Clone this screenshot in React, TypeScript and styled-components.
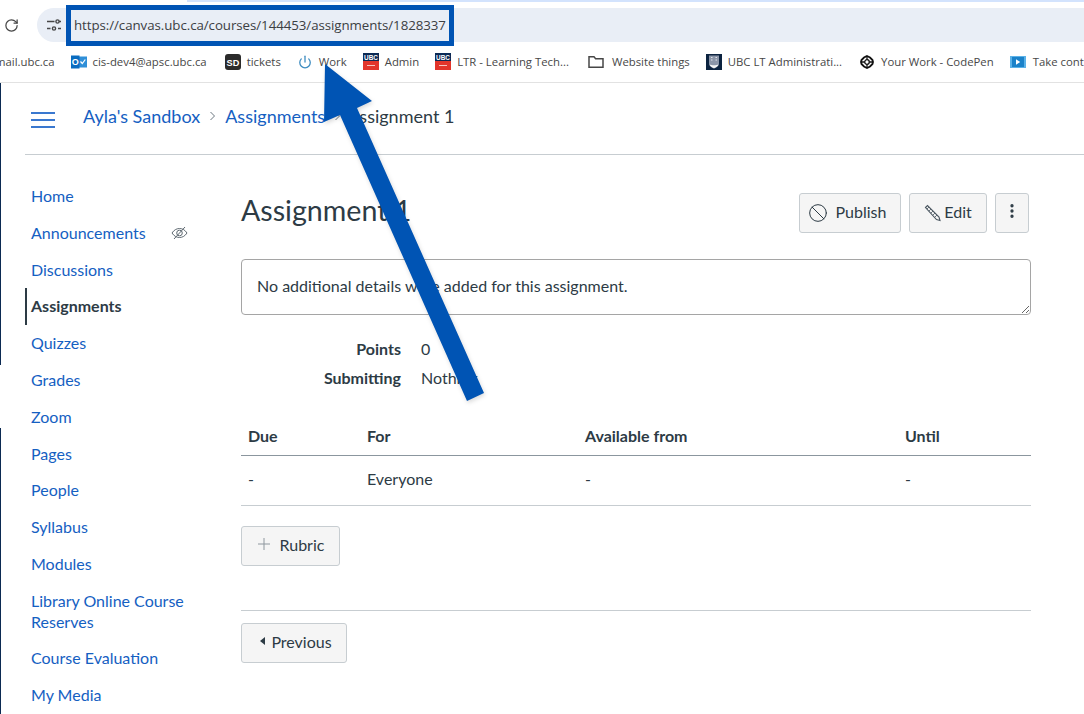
import React from "react";
import styled, { createGlobalStyle } from "styled-components";
import { Ban, EllipsisVertical, Power, RotateCw } from "lucide-react";

const GlobalStyle = createGlobalStyle`
  html, body {
    margin: 0;
    padding: 0;
    background: #fff;
  }
  * {
    box-sizing: border-box;
  }
`;

const Page = styled.div`
  position: relative;
  width: 1084px;
  height: 714px;
  overflow: hidden;
  background: #fff;
  font-family: Lato, "Liberation Sans", sans-serif;
  font-size: 16px;
  color: #2d3b45;
`;

const TabStrip = styled.div`
  height: 8px;
  padding-left: 187px;
`;

const TabEdge = styled.div`
  height: 2px;
  background: #d3e3fd;
`;

const AddressRow = styled.div`
  display: flex;
  align-items: center;
  height: 34px;
  padding-left: 4px;
`;

const Reload = styled.div`
  display: flex;
  width: 33px;
  color: #474747;
`;

const Omnibox = styled.div`
  flex: 1;
  display: flex;
  align-items: center;
  height: 34px;
  padding-left: 10px;
  background: #e9eef6;
  border-radius: 17px 0 0 17px;
`;

const Url = styled.span`
  margin-left: 13px;
  font-family: "Open Sans", "Liberation Sans", sans-serif;
  font-size: 13.3px;
  letter-spacing: -0.06px;
  color: #3c4043;
  white-space: nowrap;
`;

const BookmarksBar = styled.div`
  display: flex;
  align-items: center;
  height: 41px;
  margin-left: -5px;
  padding-bottom: 1px;
  gap: 16px;
  border-bottom: 1px solid #e2e2e2;
  white-space: nowrap;
  font-family: "Open Sans", "Liberation Sans", sans-serif;
  font-size: 11.35px;
  color: #474747;
`;

const Bookmark = styled.div<{ $gap?: number; $shift?: number }>`
  display: flex;
  align-items: center;
  gap: ${(p) => p.$gap ?? 6}px;
  flex: none;
  margin-left: ${(p) => p.$shift ?? 0}px;
`;

const TileIcon = styled.svg`
  flex: none;
  display: block;
`;

const Body = styled.div`
  display: flex;
  height: 632px;
`;

const Rail = styled.div`
  display: flex;
  flex-direction: column;
  width: 25px;
  flex: none;
`;

const RailLine = styled.div<{ $height?: number; $hidden?: boolean }>`
  width: 1px;
  background: ${(p) => (p.$hidden ? "transparent" : "#0b2a52")};
  height: ${(p) => (p.$height ? `${p.$height}px` : "auto")};
  flex: ${(p) => (p.$height ? "none" : "1")};
`;

const Content = styled.div`
  flex: 1;
  min-width: 0;
`;

const Header = styled.div`
  display: flex;
  align-items: center;
  height: 72px;
  padding-left: 6px;
  padding-bottom: 6px;
  border-bottom: 1px solid #c7cdd1;
`;

const Burger = styled.div`
  display: flex;
  flex-direction: column;
  gap: 5.3px;
  width: 24px;
  margin: 9px 28px 0 0;
  span {
    display: block;
    height: 2px;
    background: #3a78cf;
  }
`;

const Crumb = styled.span<{ $current?: boolean }>`
  font-size: 18px;
  margin-left: ${(p) => (p.$current ? -3 : 0)}px;
  color: ${(p) => (p.$current ? "#2d3b45" : "#1560c2")};
`;

const CrumbSep = styled.svg`
  margin: 0 9px;
  flex: none;
`;

const Columns = styled.div`
  display: flex;
`;

const Sidebar = styled.nav`
  width: 216px;
  flex: none;
  padding-top: 23px;
`;

const NavItem = styled.div<{ $active?: boolean }>`
  display: flex;
  align-items: center;
  justify-content: space-between;
  width: 163px;
  padding: 8px 0 8px ${(p) => (p.$active ? 4 : 6)}px;
  line-height: 20.8px;
  color: ${(p) => (p.$active ? "#2d3b45" : "#1560c2")};
  font-weight: ${(p) => (p.$active ? 700 : 400)};
  border-left: ${(p) => (p.$active ? "2px solid #2d3b45" : "none")};
`;

const Main = styled.main`
  width: 790px;
  flex: none;
  padding-top: 38px;
`;

const TitleRow = styled.div`
  display: flex;
  align-items: flex-start;
  justify-content: space-between;
  padding-right: 2px;
`;

const Title = styled.h1`
  margin: -1px 0 0;
  font-size: 28.6px;
  font-weight: 400;
  line-height: 36px;
`;

const Actions = styled.div`
  display: flex;
  gap: 8px;
`;

const Button = styled.div<{ $width: number }>`
  display: inline-flex;
  align-items: center;
  justify-content: center;
  width: ${(p) => p.$width}px;
  height: 40px;
  padding-bottom: 4px;
  background: #f5f5f5;
  border: 1px solid #c7cdd1;
  border-radius: 3px;
  color: #2d3b45;
`;

const PublishButton = styled(Button)`
  gap: 8px;
  padding-right: 6px;
  svg {
    margin-top: 3px;
  }
`;

const EditButton = styled(Button)`
  gap: 2px;
  svg {
    margin-top: 3px;
  }
`;

const Description = styled.div`
  margin-top: 26px;
  height: 56px;
  padding: 15px 15px;
  line-height: 22px;
  border: 1px solid #a5a5a5;
  border-radius: 4px;
  resize: vertical;
  overflow: auto;
`;

const Facts = styled.dl`
  display: grid;
  grid-template-columns: 160px 1fr;
  grid-auto-rows: 29px;
  column-gap: 20px;
  align-items: center;
  margin: 19px 0 0;
`;

const FactLabel = styled.dt`
  text-align: right;
  font-weight: 700;
`;

const FactValue = styled.dd`
  margin: 0;
`;

const Schedule = styled.div`
  margin-top: 25px;
`;

const ScheduleRow = styled.div<{ $head?: boolean }>`
  display: grid;
  grid-template-columns: 119px 218px 320px 1fr;
  align-items: center;
  padding-left: 7px;
  padding-bottom: ${(p) => (p.$head ? 2 : 5)}px;
  height: ${(p) => (p.$head ? 39 : 50)}px;
  border-bottom: 1px solid ${(p) => (p.$head ? "#8b969e" : "#c7cdd1")};
  font-weight: ${(p) => (p.$head ? 700 : 400)};
`;

const Rule = styled.hr`
  margin: 44px 0 12px;
  border: 0;
  border-top: 1px solid #c7cdd1;
`;

const Rubric = styled(Button)`
  margin-top: 20px;
  gap: 9px;
`;

const Previous = styled(Button)`
  gap: 5px;
  padding-left: 4px;
`;

const Callout = styled.div`
  position: absolute;
  left: 66px;
  top: 5px;
  width: 388px;
  height: 41px;
  border: 5px solid #0054b4;
`;

const ArrowOverlay = styled.svg`
  position: absolute;
  left: 0;
  top: 0;
  pointer-events: none;
  filter: drop-shadow(1px 2px 2px rgba(0, 0, 0, 0.15));
`;

const navItems = [
  "Home",
  "Announcements",
  "Discussions",
  "Assignments",
  "Quizzes",
  "Grades",
  "Zoom",
  "Pages",
  "People",
  "Syllabus",
  "Modules",
  "Library Online Course Reserves",
  "Course Evaluation",
  "My Media"
];

const UbcTile = () => (
  <TileIcon width="16" height="17" viewBox="0 0 16 17">
    <rect width="16" height="8" fill="#0c2a55" />
    <rect y="8" width="16" height="9" fill="#e2352b" />
    <text x="8" y="6.6" fontSize="6.4" fontWeight="700" fill="#fff" textAnchor="middle" fontFamily="Liberation Sans">
      UBC
    </text>
    <path d="M4 12.5h8" stroke="#f7c4bf" strokeWidth="1" />
  </TileIcon>
);

const App = () => (
  <Page>
    <GlobalStyle />
    <TabStrip>
      <TabEdge />
    </TabStrip>
    <AddressRow>
      <Reload>
        <RotateCw size={15} strokeWidth={2} />
      </Reload>
      <Omnibox>
        <svg width="14" height="14" viewBox="0 0 14 14" fill="none" stroke="#474747" strokeWidth="1.4">
          <path d="M0 3.5h7.5M0 10.5h3.5M11 10.5h3" />
          <circle cx="10.5" cy="3.5" r="1.6" />
          <circle cx="7" cy="10.5" r="1.6" />
          <path d="M12 3.5h2" />
        </svg>
        <Url>https://canvas.ubc.ca/courses/144453/assignments/1828337</Url>
      </Omnibox>
    </AddressRow>
    <BookmarksBar>
      <Bookmark>mail.ubc.ca</Bookmark>
      <Bookmark>
        <TileIcon width="16" height="16" viewBox="0 0 16 16">
          <rect x="7" y="2.5" width="9" height="11" fill="#2f8fd8" />
          <path d="M9.500 7.500l1.800 2 3-4" fill="none" stroke="#fff" strokeWidth="1.200" />
          <rect y="1.500" width="8.500" height="13" fill="#0a6cc0" />
          <text x="4.200" y="11.300" fontSize="9" fontWeight="700" fill="#fff" textAnchor="middle" fontFamily="Liberation Sans">
            O
          </text>
        </TileIcon>
        cis-dev4@apsc.ubc.ca
      </Bookmark>
      <Bookmark $shift={2}>
        <TileIcon width="16" height="16" viewBox="0 0 16 16">
          <rect width="16" height="16" rx="3" fill="#2b2b2b" />
          <text x="8" y="11.600" fontSize="9.200" fontWeight="700" fill="#fff" textAnchor="middle" fontFamily="Liberation Sans">
            SD
          </text>
        </TileIcon>
        tickets
      </Bookmark>
      <Bookmark $gap={7} $shift={1}>
        <Power size={14} color="#3d8cc0" strokeWidth={2.2} />
        Work
      </Bookmark>
      <Bookmark>
        <UbcTile />
        Admin
      </Bookmark>
      <Bookmark>
        <UbcTile />
        LTR - Learning Tech...
      </Bookmark>
      <Bookmark $gap={8} $shift={3}>
        <TileIcon width="16" height="14" viewBox="0 0 16 14" fill="none" stroke="#474747" strokeWidth="1.5">
          <path d="M1 12.300V1.800h5l1.600 1.900H15v8.600z" />
        </TileIcon>
        Website things
      </Bookmark>
      <Bookmark>
        <TileIcon width="16" height="16" viewBox="0 0 16 16">
          <rect width="16" height="16" fill="#0c2340" />
          <path d="M3 1.500h10v8c0 2.500-2.300 4-5 5-2.700-1-5-2.500-5-5z" fill="#8b95a8" />
          <path d="M3.500 10.500c2 1 7 1 9 0-.6 1.800-2.500 3-4.500 3.800-2-.8-3.900-2-4.500-3.800z" fill="#f4f4f4" />
          <path d="M5 3.500h1.500M9.500 3.500H11M5 6h1.500M9.500 6H11" stroke="#e0e3ea" strokeWidth="1" />
        </TileIcon>
        UBC LT Administrati...
      </Bookmark>
      <Bookmark $gap={7} $shift={2}>
        <TileIcon width="14" height="14" viewBox="0 0 14 14" fill="none" stroke="#111" strokeWidth="1.800">
          <path d="M7 1l3 1.500 2.500 2.500L13 7l-.5 2-2.500 2.500L7 13l-3-1.500L1.500 9 1 7l.5-2L4 2.500z" />
          <circle cx="7" cy="7" r="2.300" strokeWidth="1.300" />
          <path d="M7 1.500v3M7 9.500v3M1.500 7h3M9.500 7h3" strokeWidth="1.300" />
        </TileIcon>
        Your Work - CodePen
      </Bookmark>
      <Bookmark $gap={7}>
        <TileIcon width="16" height="12" viewBox="0 0 16 12">
          <rect width="16" height="12" fill="#5bb2e8" />
          <rect x="2" y="1" width="12" height="10" fill="#1b82c9" />
          <path d="M6 3.200l4.200 2.800L6 8.800z" fill="#fff" />
        </TileIcon>
        Take control
      </Bookmark>
    </BookmarksBar>
    <Body>
      <Rail>
        <RailLine $height={282} />
        <RailLine $height={63} $hidden />
        <RailLine />
      </Rail>
      <Content>
        <Header>
          <Burger>
            <span />
            <span />
            <span />
          </Burger>
          <Crumb>Ayla's Sandbox</Crumb>
          <CrumbSep width="7" height="10" viewBox="0 0 7 10" fill="none" stroke="#6b7780">
            <path d="M1.500 1l4 4-4 4" />
          </CrumbSep>
          <Crumb>Assignments</Crumb>
          <CrumbSep width="7" height="10" viewBox="0 0 7 10" fill="none" stroke="#6b7780">
            <path d="M1.500 1l4 4-4 4" />
          </CrumbSep>
          <Crumb $current>Assignment 1</Crumb>
        </Header>
        <Columns>
          <Sidebar>
            {navItems.map((label) => (
              <NavItem key={label} $active={label === "Assignments"}>
                {label}
                {label === "Announcements" && (
                  <svg width="17" height="14" viewBox="0 0 17 14" fill="none" stroke="#5f6a72" strokeWidth="1">
                    <path d="M1 7c2-3 4.500-4.500 7.500-4.500S14 4 16 7c-2 3-4.500 4.500-7.500 4.500S3 10 1 7z" />
                    <circle cx="8.500" cy="7" r="2.800" />
                    <path d="M3 13L14 1" />
                  </svg>
                )}
              </NavItem>
            ))}
          </Sidebar>
          <Main>
            <TitleRow>
              <Title>Assignment 1</Title>
              <Actions>
                <PublishButton $width={102}>
                  <Ban size={20} strokeWidth={1.2} color="#2d3b45" />
                  <span>Publish</span>
                </PublishButton>
                <EditButton $width={78}>
                  <svg width="18" height="18" viewBox="0 0 18 18" fill="none" stroke="#4a5660" strokeWidth="1.100">
                    <path d="M1.500 3.500l2-2L15 13l1 3.500-3.500-1z" />
                    <path d="M3 5l2-2M5 7l2-2M7 9l2-2M9 11l2-2M11 13l2-2" strokeWidth=".8" />
                  </svg>
                  <span>Edit</span>
                </EditButton>
                <Button $width={34}>
                  <EllipsisVertical size={18} strokeWidth={2.4} color="#2d3b45" />
                </Button>
              </Actions>
            </TitleRow>
            <Description>No additional details were added for this assignment.</Description>
            <Facts>
              <FactLabel>Points</FactLabel>
              <FactValue>0</FactValue>
              <FactLabel>Submitting</FactLabel>
              <FactValue>Nothing</FactValue>
            </Facts>
            <Schedule>
              <ScheduleRow $head>
                <span>Due</span>
                <span>For</span>
                <span>Available from</span>
                <span>Until</span>
              </ScheduleRow>
              <ScheduleRow>
                <span>-</span>
                <span>Everyone</span>
                <span>-</span>
                <span>-</span>
              </ScheduleRow>
            </Schedule>
            <Rubric $width={99}>
              <svg width="14" height="14" viewBox="0 0 14 14" stroke="#8e979e" strokeWidth="1">
                <path d="M7 1v12M1 7h12" />
              </svg>
              Rubric
            </Rubric>
            <Rule />
            <Previous $width={106}>
              <svg width="6" height="8" viewBox="0 0 6 8" fill="#2d3b45">
                <path d="M5 0v8L0 4z" />
              </svg>
              Previous
            </Previous>
          </Main>
        </Columns>
      </Content>
    </Body>
    <Callout />
    <ArrowOverlay width="1084" height="714" viewBox="0 0 1084 714">
      <polygon points="325,64 372,101 357,108 484,393 467,401 340,115 324,122" fill="#0054b4" />
    </ArrowOverlay>
  </Page>
);

export default App;
